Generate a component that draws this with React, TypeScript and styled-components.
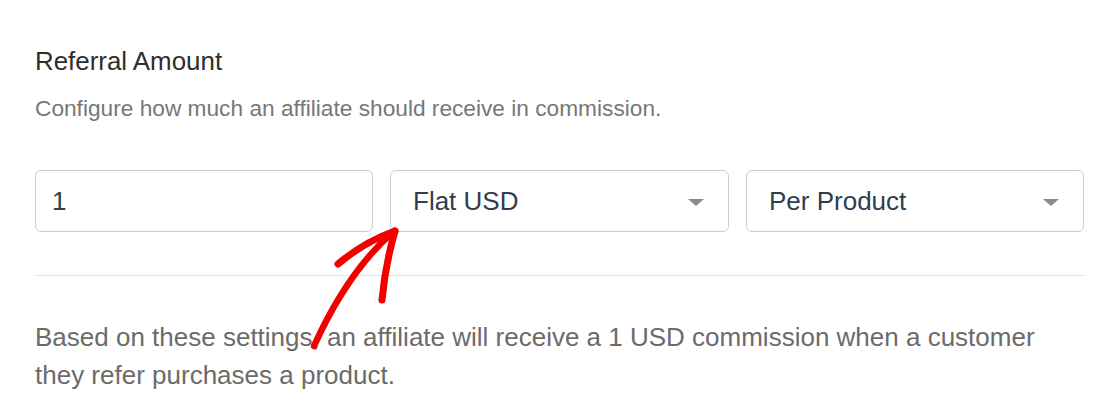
import React from 'react'
import styled, { createGlobalStyle } from 'styled-components'

const GlobalStyle = createGlobalStyle`
  html, body {
    margin: 0;
    padding: 0;
    background: #ffffff;
  }
  body {
    font-family: 'Liberation Sans', Arial, sans-serif;
  }
`

const Page = styled.div`
  position: relative;
  width: 1116px;
  height: 409px;
  box-sizing: border-box;
  padding: 46px 31px 0 35px;
  overflow: hidden;
`

const Heading = styled.h3`
  margin: 0;
  font-size: 25.9px;
  line-height: 30px;
  font-weight: 400;
  color: #2e2e2e;
`

const Description = styled.p`
  margin: 18px 0 0;
  font-size: 22.7px;
  line-height: 28px;
  color: #777777;
`

const FieldRow = styled.div`
  display: grid;
  grid-template-columns: 338px 339px 338px;
  gap: 17px;
  margin-top: 48px;
`

const fieldBox = `
  box-sizing: border-box;
  height: 62px;
  border: 1px solid #c6ced6;
  border-radius: 6px;
  background: #ffffff;
  font-family: 'Liberation Sans', Arial, sans-serif;
  font-size: 26px;
  color: #2f3e4e;
`

const NumberInput = styled.input`
  ${fieldBox}
  width: 100%;
  padding: 0 16px;
  outline: none;
`

const SelectBox = styled.div`
  ${fieldBox}
  display: flex;
  align-items: center;
  justify-content: space-between;
  padding: 0 24px 0 22px;
`

const Caret = styled.span`
  width: 0;
  height: 0;
  border-left: 8px solid transparent;
  border-right: 8px solid transparent;
  border-top: 7px solid #8c8c8c;
  margin-top: 2px;
`

const Divider = styled.hr`
  margin: 43px 0 0;
  border: none;
  border-top: 1.5px solid #e2e5e8;
`

const Summary = styled.p`
  margin: 43px 0 0;
  max-width: 1040px;
  font-size: 26px;
  line-height: 37.5px;
  color: #6b6b6b;
`

const ArrowLayer = styled.svg`
  position: absolute;
  left: 0;
  top: 0;
  pointer-events: none;
`

const Select: React.FC<{ value: string }> = ({ value }) => (
  <SelectBox>
    <span>{value}</span>
    <Caret />
  </SelectBox>
)

const HandArrow = () => (
  <ArrowLayer width={1116} height={409} viewBox="0 0 1116 409">
    <g fill="none" stroke="#f20000" strokeLinecap="round" strokeLinejoin="round">
      <path d="M314 346 Q348 271 394 231" strokeWidth={6.5} />
      <path d="M338 264 Q364 242 395 231" strokeWidth={7} />
      <path d="M395 231 Q385 266 382 300" strokeWidth={7} />
    </g>
  </ArrowLayer>
)

export default function App() {
  return (
    <>
      <GlobalStyle />
      <Page>
        <Heading>Referral Amount</Heading>
        <Description>Configure how much an affiliate should receive in commission.</Description>
        <FieldRow>
          <NumberInput type="text" defaultValue="1" />
          <Select value="Flat USD" />
          <Select value="Per Product" />
        </FieldRow>
        <Divider />
        <Summary>
          Based on these settings, an affiliate will receive a 1 USD commission when a customer
          they refer purchases a product.
        </Summary>
        <HandArrow />
      </Page>
    </>
  )
}
